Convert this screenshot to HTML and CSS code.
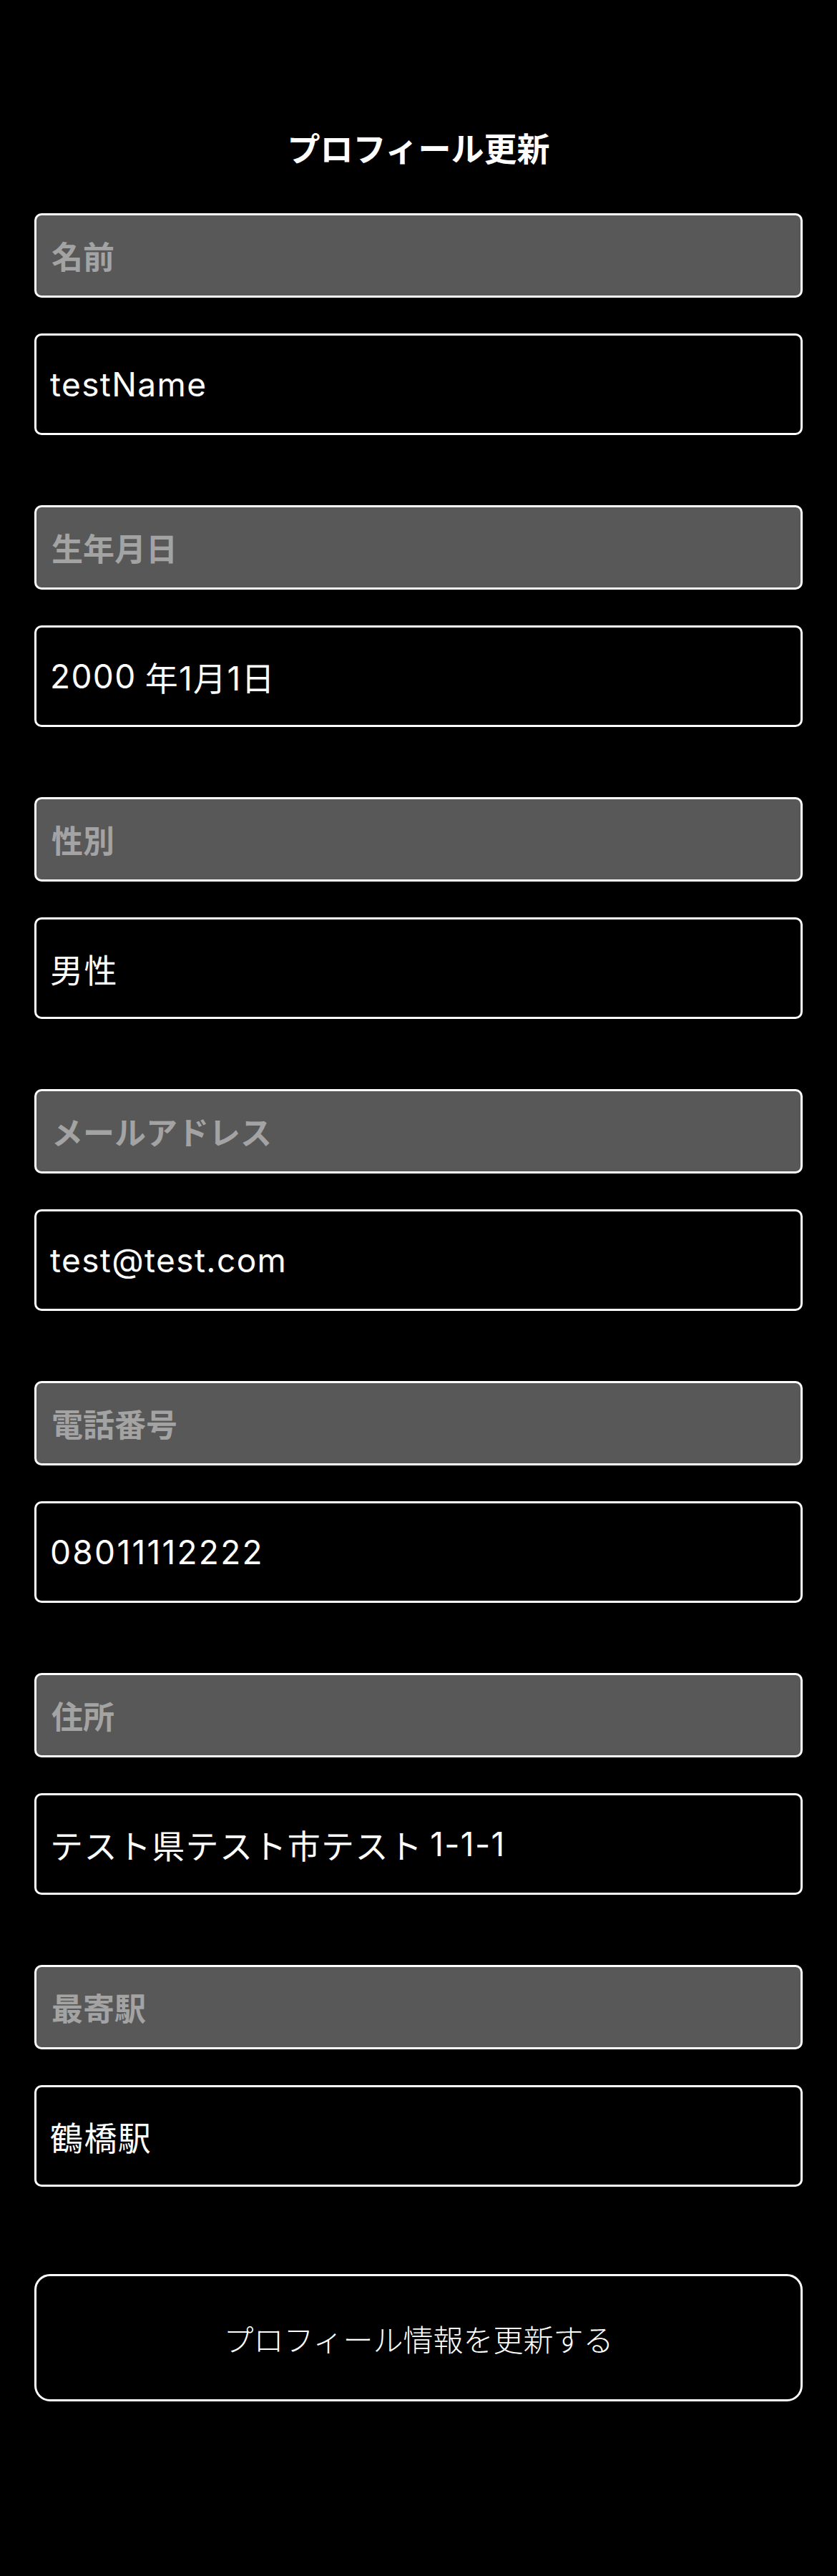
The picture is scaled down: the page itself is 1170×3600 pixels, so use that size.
FILE: index.html
```html
<!DOCTYPE html>
<html lang="ja">
<head>
<meta charset="utf-8">
<title>プロフィール更新</title>
<link rel="stylesheet" href="styles.css">
</head>
<body>
<main class="page">
  <h1 class="title">プロフィール更新</h1>
  <form class="form">
    <div class="field">
      <div class="label">名前</div>
      <div class="value">testName</div>
    </div>
    <div class="field">
      <div class="label">生年月日</div>
      <div class="value"><span class="num-gap">2000</span>年1月1日</div>
    </div>
    <div class="field">
      <div class="label">性別</div>
      <div class="value">男性</div>
    </div>
    <div class="field">
      <div class="label">メールアドレス</div>
      <div class="value">test@test.com</div>
    </div>
    <div class="field">
      <div class="label">電話番号</div>
      <div class="value digits">08011112222</div>
    </div>
    <div class="field">
      <div class="label">住所</div>
      <div class="value">テスト県テスト市テスト<span class="gap-before">1-1-1</span></div>
    </div>
    <div class="field">
      <div class="label">最寄駅</div>
      <div class="value">鶴橋駅</div>
    </div>
    <button type="button" class="submit">プロフィール情報を更新する</button>
  </form>
</main>
</body>
</html>
```
FILE: styles.css
```css
html, body {
  margin: 0;
  padding: 0;
  background: #000;
}

body {
  color: #fff;
  font-family: "Noto Sans CJK JP", "Noto Sans", sans-serif;
}

.page {
  padding: 175px 48px 0;
  min-height: 3600px;
  box-sizing: border-box;
}

.title {
  margin: 0;
  text-align: center;
  font-size: 46px;
  line-height: 60px;
  font-weight: 700;
}

.form {
  margin-top: 63px;
  display: flex;
  flex-direction: column;
  gap: 98px;
}

.field {
  display: flex;
  flex-direction: column;
  gap: 50px;
}

.label,
.value {
  box-sizing: border-box;
  border: 3px solid #fff;
  border-radius: 10px;
  display: flex;
  align-items: center;
}

.label {
  height: 118px;
  background: #585858;
  color: #a3a3a3;
  font-size: 44px;
  font-weight: 700;
  padding-left: 21px;
}

.value {
  height: 142px;
  background: #000;
  color: #fff;
  font-family: Inter, "Noto Sans CJK JP", sans-serif;
  font-size: 46px;
  font-weight: 400;
  letter-spacing: 0.03em;
  padding-left: 19px;
}

.value.digits {
  letter-spacing: 0.05em;
}

.num-gap {
  margin-right: 12px;
}

.gap-before {
  margin-left: 10px;
}

.submit {
  margin-top: 24px;
  height: 178px;
  box-sizing: border-box;
  border: 3px solid #fff;
  border-radius: 22px;
  background: #000;
  color: #fff;
  font-family: "Noto Sans CJK JP", sans-serif;
  font-size: 42px;
  font-weight: 300;
  cursor: pointer;
}
```
